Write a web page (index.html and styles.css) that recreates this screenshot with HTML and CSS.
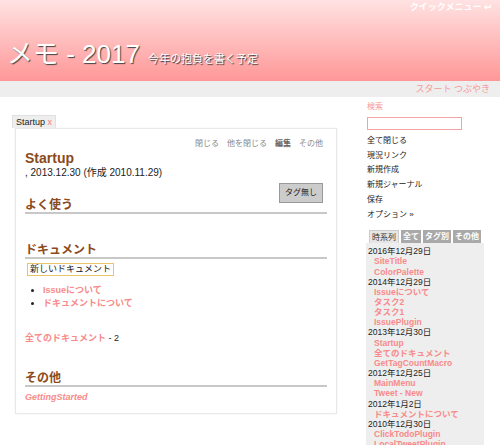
FILE: index.html
```html
<!DOCTYPE html>
<html lang="ja">

<head>
    <meta charset="UTF-8">
    <meta name="viewport" content="width=device-width, initial-scale=1.0">
    <title>メモ - 2017</title>
    <link rel="stylesheet" href="styles.css">
</head>

<body>
    <div class="header">
        <div class="quick">クイックメニュー ↩</div>
        <div class="title">メモ - 2017<span class="subtitle">今年の抱負を書く予定</span></div>
    </div>
    <div class="nav"><a>スタート</a> <a>つぶやき</a></div>

    <div class="main">
        <div class="content">
            <div class="tab">Startup <span class="close">x</span></div>
            <div class="card">
                <div class="toolbar">
                    <span>閉じる</span>
                    <span>他を閉じる</span>
                    <span class="edit">編集</span>
                    <span>その他</span>
                </div>
                <div class="cardTitle">Startup</div>
                <div class="date">, 2013.12.30 (作成 2010.11.29)</div>
                <div class="tagBtn">タグ無し</div>
                <h2 class="first">よく使う</h2>

                <h2 class="docs">ドキュメント</h2>
                <div class="newDoc">新しいドキュメント</div>
                <ul class="docList">
                    <li><a>Issueについて</a></li>
                    <li><a>ドキュメントについて</a></li>
                </ul>
                <div class="allDocs"><a>全てのドキュメント</a> - 2</div>

                <h2 class="other">その他</h2>
                <div class="started"><a>GettingStarted</a></div>
            </div>
        </div>

        <div class="sidebar">
            <div class="searchLabel">検索</div>
            <div class="searchBox"></div>
            <ul class="menu">
                <li>全て閉じる</li>
                <li>現況リンク</li>
                <li>新規作成</li>
                <li>新規ジャーナル</li>
                <li>保存</li>
                <li>オプション »</li>
            </ul>
            <div class="sideTabs">
                <span class="active">時系列</span>
                <span>全て</span>
                <span>タグ別</span>
                <span>その他</span>
            </div>
            <div class="timeline">
                <div class="day">2016年12月29日</div>
                <a>SiteTitle</a>
                <a>ColorPalette</a>
                <div class="day">2014年12月29日</div>
                <a>Issueについて</a>
                <a>タスク2</a>
                <a>タスク1</a>
                <a>IssuePlugin</a>
                <div class="day">2013年12月30日</div>
                <a>Startup</a>
                <a>全てのドキュメント</a>
                <a>GetTagCountMacro</a>
                <div class="day">2012年12月25日</div>
                <a>MainMenu</a>
                <a>Tweet - New</a>
                <div class="day">2012年1月2日</div>
                <a>ドキュメントについて</a>
                <div class="day">2010年12月30日</div>
                <a>ClickTodoPlugin</a>
                <a>LocalTweetPlugin</a>
            </div>
        </div>
    </div>
</body>

</html>
```

FILE: styles.css
```css
* {
    padding: 0px;
    margin: 0px;
    list-style: none;
    box-sizing: border-box;
}

body {
    font-family: "Liberation Sans", "Noto Sans CJK JP", sans-serif;
    color: #222;
    background-color: #fff;
    overflow: hidden;
}

a {
    color: #f88a8a;
}

.header {
    height: 81px;
    background: linear-gradient(#ffe2e2, #ff9797);
}

.header .quick {
    height: 14px;
    line-height: 14px;
    padding-right: 8px;
    text-align: right;
    font-size: 9px;
    font-weight: bold;
    color: #fff;
}

.header .title {
    margin-top: 25px;
    padding-left: 7px;
    font-size: 26px;
    line-height: 30px;
    color: #fff;
    text-shadow: 1px 1px 1px #444;
}

.header .subtitle {
    margin-left: 8px;
    font-size: 11px;
    text-shadow: 1px 1px 1px #333;
}

.nav {
    height: 16px;
    line-height: 16px;
    padding-right: 10px;
    text-align: right;
    font-size: 9px;
    background-color: #eee;
}

.nav a {
    color: #f59999;
}

.main {
    display: flex;
}

.content {
    width: 337px;
    padding: 18px 0px 0px 12px;
}

.tab {
    width: fit-content;
    height: 13px;
    line-height: 13px;
    padding: 0px 3px;
    font-size: 9px;
    background-color: #eee;
    border: 1px solid #e0e0e0;
    border-bottom: none;
}

.tab .close {
    color: #f77;
}

.card {
    margin-left: 3px;
    padding: 9px 9px 10px 9px;
    border: 1px solid #e8e8e8;
    box-shadow: 0px 0px 2px #f0f0f0;
}

.card .toolbar {
    display: flex;
    justify-content: flex-end;
    gap: 8px;
    padding-right: 4px;
    font-size: 8px;
    line-height: 12px;
    color: #888;
}

.card .toolbar .edit {
    color: #666;
    font-weight: bold;
}

.card .cardTitle {
    font-size: 14px;
    font-weight: bold;
    line-height: 16px;
    color: #8b4a1c;
}

.card .date {
    margin-top: 1px;
    font-size: 10px;
    line-height: 12px;
}

.card .tagBtn {
    float: right;
    margin: 4px 4px 0px 0px;
    height: 20px;
    line-height: 18px;
    padding: 0px 5px;
    font-size: 8px;
    background-color: #ccc;
    border: 1px solid #999;
}

.card h2 {
    font-size: 12px;
    line-height: 14px;
    color: #8b4a1c;
    border-bottom: 2px solid #c8c8c8;
}

.card h2.first {
    margin-top: 19px;
}

.card h2.docs {
    margin-top: 29px;
}

.card h2.other {
    margin-top: 27px;
}

.card .newDoc {
    margin: 4px 0px 0px 2px;
    width: 87px;
    height: 13px;
    line-height: 11px;
    padding-left: 2px;
    font-size: 9px;
    border: 1px solid #e8c56a;
}

.card .docList {
    margin-top: 8px;
    padding-left: 18px;
}

.card .docList li {
    list-style: disc;
    font-size: 9px;
    line-height: 12.5px;
}

.card .docList a {
    font-weight: bold;
}

.card .allDocs {
    margin-top: 23px;
    font-size: 9px;
    line-height: 12px;
}

.card .allDocs a {
    font-weight: bold;
}

.card .started {
    margin-top: 4px;
    font-size: 9px;
    line-height: 12px;
    font-style: italic;
    font-weight: bold;
}

.sidebar {
    margin-left: 30px;
    width: 122px;
    padding-top: 5px;
}

.sidebar .searchLabel {
    font-size: 8px;
    line-height: 10px;
    color: #f59a9a;
}

.sidebar .searchBox {
    margin-top: 5px;
    width: 95px;
    height: 13px;
    border: 1px solid #f4a3a3;
}

.sidebar .menu {
    margin-top: 4px;
}

.sidebar .menu li {
    font-size: 8px;
    line-height: 14.7px;
}

.sidebar .sideTabs {
    display: flex;
    gap: 2px;
    margin-top: 8px;
    padding-left: 2px;
}

.sidebar .sideTabs span {
    height: 13px;
    line-height: 13px;
    padding: 0px 2px;
    font-size: 8px;
    font-weight: bold;
    color: #fff;
    background-color: #a9a9a9;
}

.sidebar .sideTabs .active {
    font-weight: normal;
    color: #333;
    background-color: #e6e6e6;
    border: 1px solid #ccc;
    border-bottom: none;
}

.sidebar .timeline {
    margin-left: -1px;
    width: 118px;
    padding: 3px 0px 0px 2px;
    background-color: #eee;
    font-size: 8.5px;
    line-height: 10.15px;
}

.sidebar .timeline a {
    display: block;
    padding-left: 6px;
    font-weight: bold;
}
```
